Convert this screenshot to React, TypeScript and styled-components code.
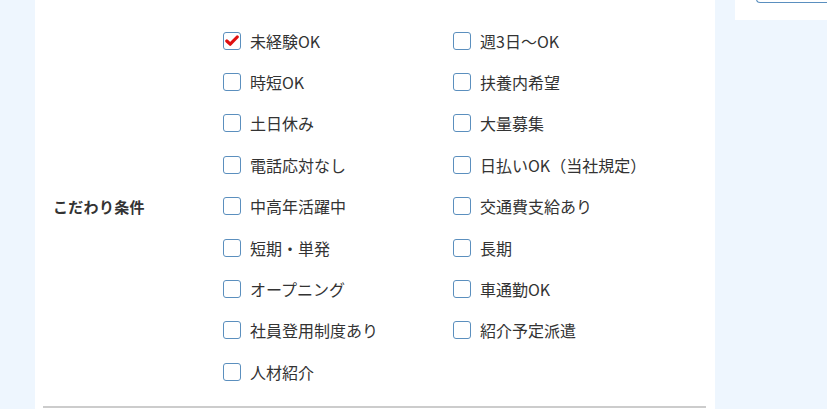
import React from 'react';
import styled, { createGlobalStyle } from 'styled-components';

const GlobalStyle = createGlobalStyle`
  html, body {
    margin: 0;
    padding: 0;
    background: #eef6fe;
    font-family: "Noto Sans CJK JP", "Noto Sans", sans-serif;
    color: #333;
    overflow: hidden;
  }
`;

const Page = styled.div`
  display: flex;
  align-items: flex-start;
  gap: 20px;
  padding-left: 35px;
  height: 409px;
`;

const Panel = styled.div`
  width: 680px;
  height: 409px;
  background: #fff;
  padding: 0 9px 0 8px;
  box-sizing: border-box;
`;

const ConditionRow = styled.div`
  display: flex;
  align-items: center;
  border-bottom: 2px solid #cccccc;
  padding: 20px 0 13px;
`;

const RowLabel = styled.div`
  width: 180px;
  padding-left: 10px;
  box-sizing: border-box;
  font-size: 15px;
  font-weight: 700;
  color: #333;
  letter-spacing: 0.3px;
`;

const OptionGrid = styled.div`
  display: grid;
  grid-template-columns: 230px 230px;
  grid-auto-rows: 41.4px;
`;

const Option = styled.label`
  display: flex;
  align-items: center;
  gap: 9px;
  font-size: 16px;
  color: #333;
  cursor: pointer;
`;

const Box = styled.span<{ $checked?: boolean }>`
  width: 18px;
  height: 18px;
  box-sizing: border-box;
  border: 1.5px solid #5b8fbe;
  border-radius: 3px;
  background: #fff;
  display: flex;
  align-items: center;
  justify-content: center;
  flex-shrink: 0;
`;

const Sidebar = styled.div`
  width: 92px;
  height: 20px;
  background: #fff;
  padding-left: 21px;
  box-sizing: border-box;
`;

const SideButton = styled.div`
  height: 20px;
  margin-top: -19px;
  border: 1.5px solid #5a8fbf;
  border-right: none;
  border-radius: 0 0 0 4px;
`;

const options: [string, boolean][] = [
  ['未経験OK', true],
  ['週3日〜OK', false],
  ['時短OK', false],
  ['扶養内希望', false],
  ['土日休み', false],
  ['大量募集', false],
  ['電話応対なし', false],
  ['日払いOK（当社規定）', false],
  ['中高年活躍中', false],
  ['交通費支給あり', false],
  ['短期・単発', false],
  ['長期', false],
  ['オープニング', false],
  ['車通勤OK', false],
  ['社員登用制度あり', false],
  ['紹介予定派遣', false],
  ['人材紹介', false],
];

const Check = () => (
  <svg width="14" height="12" viewBox="0 0 14 12">
    <path d="M1.8 6 L5.2 9.2 L12.2 2" fill="none" stroke="#e01010" strokeWidth="3.2" strokeLinecap="round" strokeLinejoin="round" />
  </svg>
);

export default function App() {
  return (
    <>
      <GlobalStyle />
      <Page>
        <Panel>
          <ConditionRow>
            <RowLabel>こだわり条件</RowLabel>
            <OptionGrid>
              {options.map(([text, checked]) => (
                <Option key={text}>
                  <Box $checked={checked}>{checked && <Check />}</Box>
                  {text}
                </Option>
              ))}
            </OptionGrid>
          </ConditionRow>
        </Panel>
        <Sidebar>
          <SideButton />
        </Sidebar>
      </Page>
    </>
  );
}
